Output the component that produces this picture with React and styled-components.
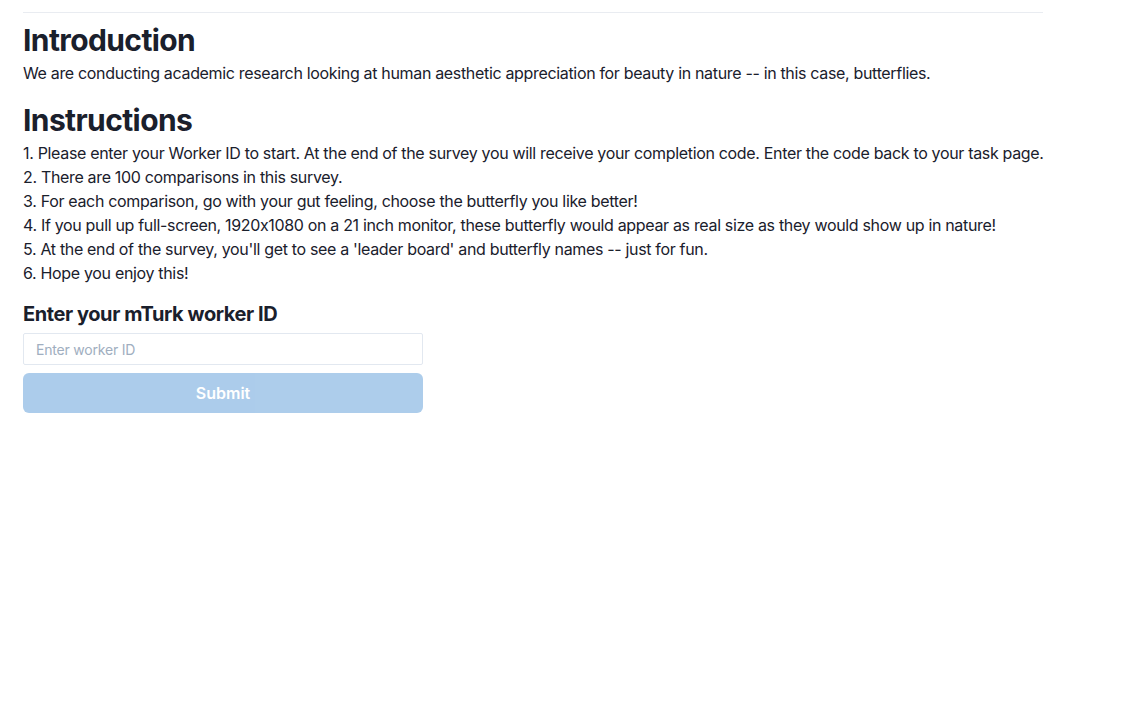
import React, {useState} from "react"
import styled, {createGlobalStyle} from "styled-components"

const steps = [
  "Please enter your Worker ID to start. At the end of the survey you will receive your completion code. Enter the code back to your task page.",
  "There are 100 comparisons in this survey.",
  "For each comparison, go with your gut feeling, choose the butterfly you like better!",
  "If you pull up full-screen, 1920x1080 on a 21 inch monitor, these butterfly would appear as real size as they would show up in nature!",
  "At the end of the survey, you'll get to see a 'leader board' and butterfly names -- just for fun.",
  "Hope you enjoy this!",
]

const App = () => {
  const [workerId, setWorkerId] = useState("")

  return (
    <>
      <GlobalStyle/>
      <Page>
        <Divider/>
        <Section>
          <Heading>Introduction</Heading>
          <Text>
            We are conducting academic research looking at human aesthetic appreciation for beauty in nature -- in this case, butterflies.
          </Text>
        </Section>
        <Section>
          <Heading>Instructions</Heading>
          <List>
            {steps.map((step, i) => (
              <Item key={i}>{i + 1}. {step}</Item>
            ))}
          </List>
        </Section>
        <Form onSubmit={(e) => e.preventDefault()}>
          <Label htmlFor="worker">Enter your mTurk worker ID</Label>
          <Input
            id="worker"
            placeholder="Enter worker ID"
            value={workerId}
            onChange={(e) => setWorkerId(e.target.value)}
          />
          <Button type="submit" disabled={!workerId}>Submit</Button>
        </Form>
      </Page>
    </>
  )
}

export default App

const GlobalStyle = createGlobalStyle`
  body {
    margin: 0;
    background: #fff;
    color: #1A202C;
    font-family: Inter, "Noto Sans", sans-serif;
    font-feature-settings: "calt" 0;
  }
`
const Page = styled.div`
  width: 1020px;
  padding: 12px 23px;
`
const Divider = styled.hr`
  border: 0;
  border-top: 1px solid #E9ECF1;
  margin: 0 0 9px;
`
const Section = styled.section`
  margin-bottom: 17px;
`
const Heading = styled.h2`
  font-size: 30px;
  line-height: 36px;
  font-weight: 700;
  letter-spacing: -0.6px;
  margin: 0 0 3px;
`
const Text = styled.p`
  font-size: 16px;
  line-height: 24px;
  letter-spacing: -0.33px;
  margin: 0;
`
const List = styled.div`
  font-size: 16px;
  line-height: 24px;
  letter-spacing: -0.33px;
  white-space: nowrap;
`
const Item = styled.div``
const Form = styled.form`
  display: flex;
  flex-direction: column;
  width: 400px;
`
const Label = styled.label`
  font-size: 20px;
  line-height: 24px;
  font-weight: 700;
  letter-spacing: -0.42px;
  margin: 0 0 7px;
`
const Input = styled.input`
  height: 32px;
  box-sizing: border-box;
  border: 1px solid #E2E8F0;
  border-radius: 2px;
  padding: 0 12px;
  font-family: inherit;
  font-size: 14px;
  letter-spacing: -0.2px;
  color: #1A202C;
  outline: none;
  &::placeholder {
    color: #A0AEC0;
  }
`
const Button = styled.button`
  margin-top: 8px;
  height: 40px;
  border: 0;
  border-radius: 6px;
  background: #3182CE;
  color: #fff;
  font-family: inherit;
  font-size: 16px;
  font-weight: 600;
  cursor: pointer;
  &:disabled {
    opacity: 0.4;
    cursor: not-allowed;
  }
`
